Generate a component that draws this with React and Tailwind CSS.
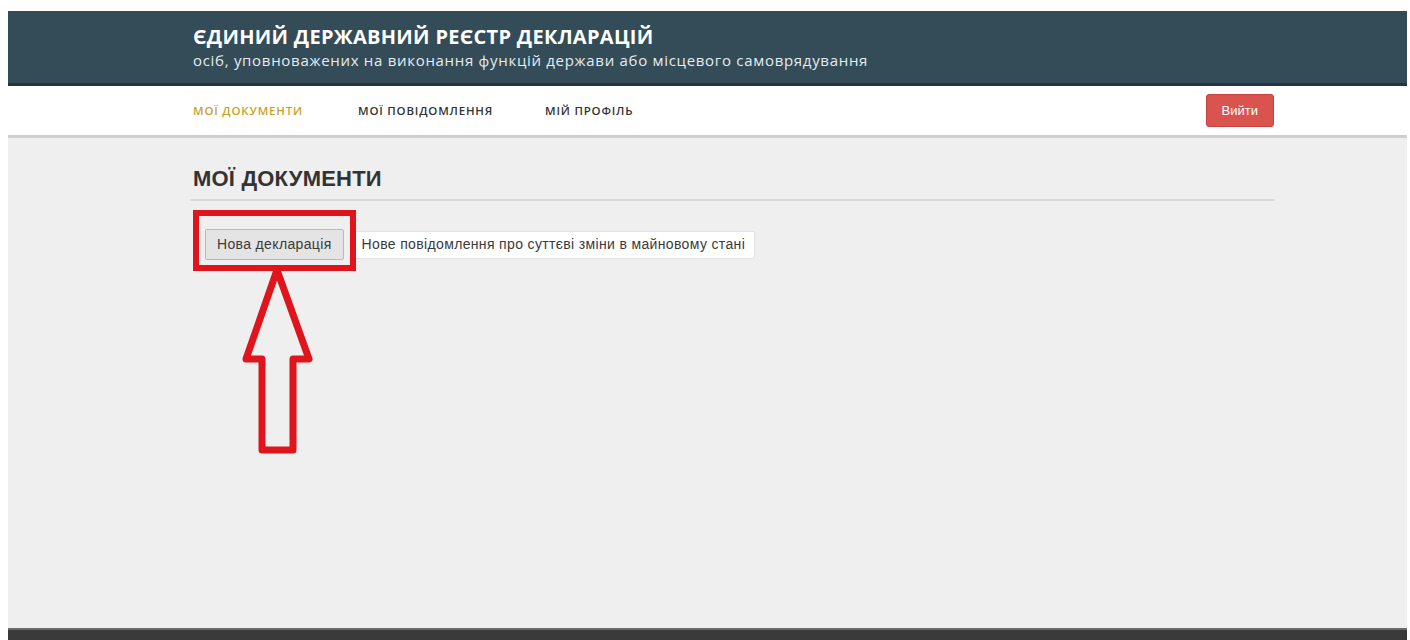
import React from 'react';

const navItems = [
  { label: 'Мої документи', active: true, width: 'w-[165px]' },
  { label: 'Мої повідомлення', active: false, width: 'w-[187px]' },
  { label: 'Мій профіль', active: false, width: 'w-auto' },
];

// Red outline arrow pointing up at the highlighted button
const ArrowUp = () => (
  <svg
    className="absolute left-[237px] top-[260px]"
    width="80"
    height="200"
    viewBox="0 0 80 200"
  >
    <path
      d="M40 10 L72 99 L56 99 L56 190 L25 190 L25 99 L9 99 Z"
      fill="none"
      stroke="#e0141c"
      strokeWidth="7"
      strokeLinejoin="round"
    />
  </svg>
);

export default function App() {
  return (
    <div className="relative h-[640px] bg-white pl-[8px] pr-[3px] pt-[11px] flex flex-col overflow-hidden font-['Open_Sans',sans-serif]">
      {/* Header */}
      <header className="h-[75px] shrink-0 bg-[#344b58] border-b-[3px] border-[#243640]">
        <div className="pl-[185px] pt-[13px]">
          <h1 className="text-[20px] leading-[26px] font-bold text-white tracking-[0.3px]">
            ЄДИНИЙ ДЕРЖАВНИЙ РЕЄСТР ДЕКЛАРАЦІЙ
          </h1>
          <p className="mt-[2px] text-[15px] leading-[17px] text-[#e6ecef] tracking-[0.7px]">
            осіб, уповноважених на виконання функцій держави або місцевого самоврядування
          </p>
        </div>
      </header>

      {/* Navigation */}
      <nav className="h-[52px] shrink-0 bg-white border-b-[3px] border-[#cfcfcf] flex items-center pl-[185px] pr-[133px]">
        <ul className="flex items-center">
          {navItems.map((item) => (
            <li
              key={item.label}
              className={`${item.width} text-[11.5px] uppercase font-semibold tracking-[0.8px] ${
                item.active ? 'text-[#c9a22a]' : 'text-[#333]'
              }`}
            >
              {item.label}
            </li>
          ))}
        </ul>
        <button className="ml-auto h-[33px] px-[15px] rounded-[3px] bg-[#d9534f] border border-[#c9403c] text-white text-[13px] font-['Liberation_Sans',sans-serif]">
          Вийти
        </button>
      </nav>

      {/* Content */}
      <main className="flex-1 bg-[#efefef] pl-[182px] pr-[132px] pt-[27px]">
        <h2 className="text-[22px] leading-[28px] font-bold text-[#333] font-['Liberation_Sans',sans-serif] pl-[3px] tracking-[0.2px]">
          МОЇ ДОКУМЕНТИ
        </h2>
        <div className="mt-[6px] border-t-2 border-[#d9d9d9]" />
        <div className="mt-[28px] flex items-center pl-[15px] gap-[8px] font-['Liberation_Sans',sans-serif] text-[14px] tracking-[0.35px] text-[#3a3a3a]">
          <button className="h-[31px] px-[11px] bg-[#e4e4e4] border border-[#b8b8b8] rounded-[2px]">
            Нова декларація
          </button>
          <button className="h-[28px] px-[9px] bg-white border border-[#e2e2e2] rounded-[2px]">
            Нове повідомлення про суттєві зміни в майновому стані
          </button>
        </div>
      </main>

      {/* Footer */}
      <footer className="h-[12px] shrink-0 bg-[#3a3a3a] border-t-2 border-[#6a6a6a]" />

      {/* Annotation: highlight box around the first button */}
      <div className="absolute left-[193px] top-[210px] w-[163px] h-[61px] border-[6px] border-[#e0141c]" />
      <ArrowUp />
    </div>
  );
}
